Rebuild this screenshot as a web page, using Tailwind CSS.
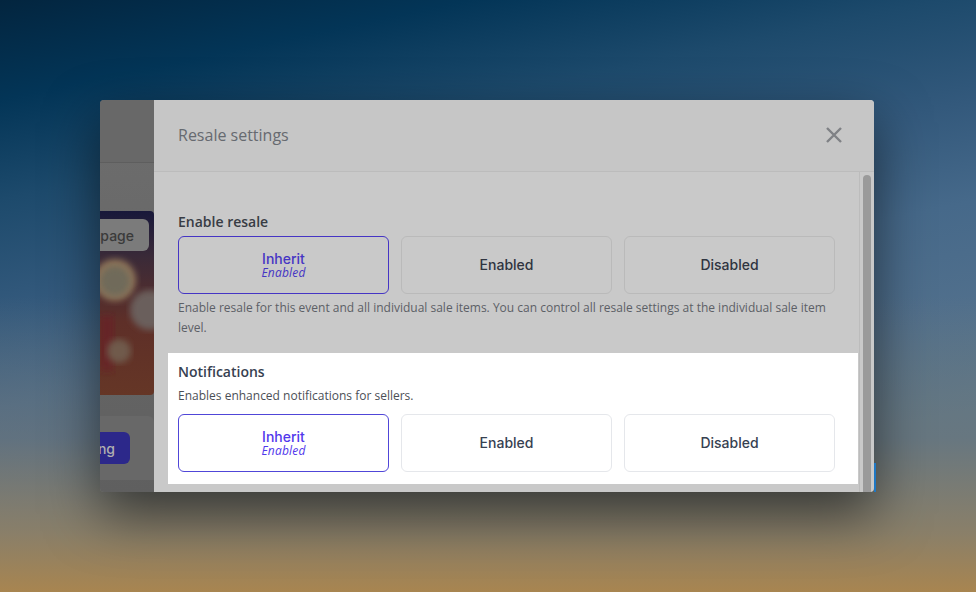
<!DOCTYPE html>
<html lang="en">
<head>
    <meta charset="UTF-8">
    <meta name="viewport" content="width=device-width, initial-scale=1.0">
    <title>Resale settings</title>
    <script src="https://cdn.jsdelivr.net/npm/@tailwindcss/browser@4"></script>
</head>
<body class="h-[592px] w-[976px] overflow-hidden font-['Open_Sans',sans-serif] bg-[linear-gradient(180deg,rgba(110,118,120,0)_50%,rgba(112,118,120,0.6)_74%,rgba(142,128,102,0.92)_90%,#a88550_100%),linear-gradient(168deg,#03253f_0%,#033557_12.5%,#1d4a6c_25%,#33597c_38.5%,#46698a_51%,#506f8c_63.4%,#5a788c_77%,#5a788c_100%)]">

    <div class="pt-[100px] pl-[100px]">
        <div class="relative w-[774px] h-[392px] flex rounded-[4px] shadow-[0_22px_54px_rgba(0,0,0,0.55)]">

            <!-- page behind the panel -->
            <div class="w-[54px] shrink-0 flex flex-col overflow-hidden rounded-l-[4px] bg-[linear-gradient(180deg,#6e6e6e_0%,#5f5f5f_100%)]">
                <div class="h-[63px] shrink-0 border-b border-[#5e5e5e] bg-[#686868]"></div>
                <div class="relative mt-[48px] h-[184px] shrink-0 overflow-hidden rounded-r-[4px]">
                    <svg class="w-full h-full block" viewBox="0 0 54 184" preserveAspectRatio="none">
                        <defs>
                            <linearGradient id="photo" x1="0" y1="0" x2="0" y2="1">
                                <stop offset="0" stop-color="#18183a"/>
                                <stop offset="0.25" stop-color="#3a2a38"/>
                                <stop offset="0.6" stop-color="#5e2f28"/>
                                <stop offset="1" stop-color="#653626"/>
                            </linearGradient>
                            <filter id="soft"><feGaussianBlur stdDeviation="3"/></filter>
                        </defs>
                        <rect width="54" height="184" fill="url(#photo)"/>
                        <rect x="0" y="105" width="14" height="55" fill="#6b1c26" opacity="0.6" filter="url(#soft)"/>
                        <circle cx="15" cy="69" r="21" fill="#8c7358" filter="url(#soft)"/>
                        <circle cx="15" cy="70" r="15" fill="#6f6b5a" filter="url(#soft)"/>
                        <circle cx="50" cy="99" r="20" fill="#6b5f5b" filter="url(#soft)"/>
                        <circle cx="19" cy="140" r="12" fill="#6f5a4b" filter="url(#soft)"/>
                    </svg>
                    <div class="absolute top-[8px] right-[5px] h-[32px] flex items-center pl-[1px] pr-[15px] rounded-r-[6px] bg-[#7b7b7b] text-[14px] font-medium font-['Inter',sans-serif] text-[#3a3a3a]">page</div>
                </div>
                <div class="mt-[21px] h-[64px] shrink-0 flex items-start justify-end rounded-tr-[6px] bg-[#686868] pt-[16px] pr-[24px]">
                    <div class="h-[32px] flex items-center pr-[15px] rounded-r-[6px] bg-[#2c288a] text-[14px] font-medium font-['Inter',sans-serif] text-[#b0b0b0]">ng</div>
                </div>
            </div>

            <!-- resale panel -->
            <div class="flex-1 min-w-0 flex flex-col overflow-hidden rounded-r-[4px] bg-[#c9c9c9]">
                <div class="h-[72px] shrink-0 flex items-center justify-between pl-[24px] pr-[32px] pb-[1px] border-b border-[#bcbcbc] bg-[#c6c6c6]">
                    <h2 class="text-[16px] text-[#666a70]">Resale settings</h2>
                    <svg class="w-[16px] h-[16px]" viewBox="0 0 16 16" fill="none" stroke="#7f8185" stroke-width="2.4">
                        <path d="M1 1l14 14M15 1L1 15"/>
                    </svg>
                </div>
                <div class="flex-1 min-h-0 flex">
                    <div class="flex-1 min-w-0 pl-[24px] pr-[24px] pt-[40px]">
                        <h3 class="text-[14px] leading-[20px] font-semibold text-[#383c44]">Enable resale</h3>
                        <div class="mt-[4px] grid grid-cols-3 gap-[12px]">
                            <div class="h-[58px] pt-[2px] flex flex-col items-center justify-center rounded-[6px] border border-[#4535c4]">
                                <span class="text-[14px] leading-[14px] font-medium font-['Inter',sans-serif] text-[#4535c4]">Inherit</span>
                                <span class="text-[12px] leading-[14px] italic tracking-[0.2px] text-[#4535c4]">Enabled</span>
                            </div>
                            <div class="h-[58px] pb-[2px] flex items-center justify-center rounded-[6px] border border-[#bababa] text-[14px] font-medium font-['Inter',sans-serif] text-[#2f3440]">Enabled</div>
                            <div class="h-[58px] pb-[2px] flex items-center justify-center rounded-[6px] border border-[#bababa] text-[14px] font-medium font-['Inter',sans-serif] text-[#2f3440]">Disabled</div>
                        </div>
                        <p class="mt-[4px] text-[12px] leading-[20px] text-[#5c6066]">Enable resale for this event and all individual sale items. You can control all resale settings at the individual sale item level.</p>

                        <div class="mt-[15px] -ml-[10px] -mr-[23px] h-[131px] pl-[10px] pr-[23px] pt-[9px] bg-white">
                            <h3 class="text-[14px] leading-[20px] font-semibold text-[#374151]">Notifications</h3>
                            <p class="mt-[4px] text-[12px] leading-[20px] text-[#4b4f56]">Enables enhanced notifications for sellers.</p>
                            <div class="mt-[8px] grid grid-cols-3 gap-[12px]">
                                <div class="h-[58px] pt-[2px] flex flex-col items-center justify-center rounded-[6px] border border-[#5046d8]">
                                    <span class="text-[14px] leading-[14px] font-medium font-['Inter',sans-serif] text-[#5138ec]">Inherit</span>
                                    <span class="text-[12px] leading-[14px] italic tracking-[0.2px] text-[#5138ec]">Enabled</span>
                                </div>
                                <div class="h-[58px] pb-[2px] flex items-center justify-center rounded-[6px] border border-[#e5e7eb] text-[14px] font-medium font-['Inter',sans-serif] text-[#374151]">Enabled</div>
                                <div class="h-[58px] pb-[2px] flex items-center justify-center rounded-[6px] border border-[#e5e7eb] text-[14px] font-medium font-['Inter',sans-serif] text-[#374151]">Disabled</div>
                            </div>
                        </div>
                    </div>
                    <div class="w-[15px] shrink-0 border-l border-[#bcbcbc] pt-[3px] pl-[3px]">
                        <div class="w-[8px] h-[340px] rounded-t-[4px] bg-[#9a9a9a]"></div>
                    </div>
                </div>
            </div>

            <div class="absolute right-[-2px] bottom-0 w-[2px] h-[29px] bg-[#1f78c4]"></div>
        </div>
    </div>

</body>
</html>
